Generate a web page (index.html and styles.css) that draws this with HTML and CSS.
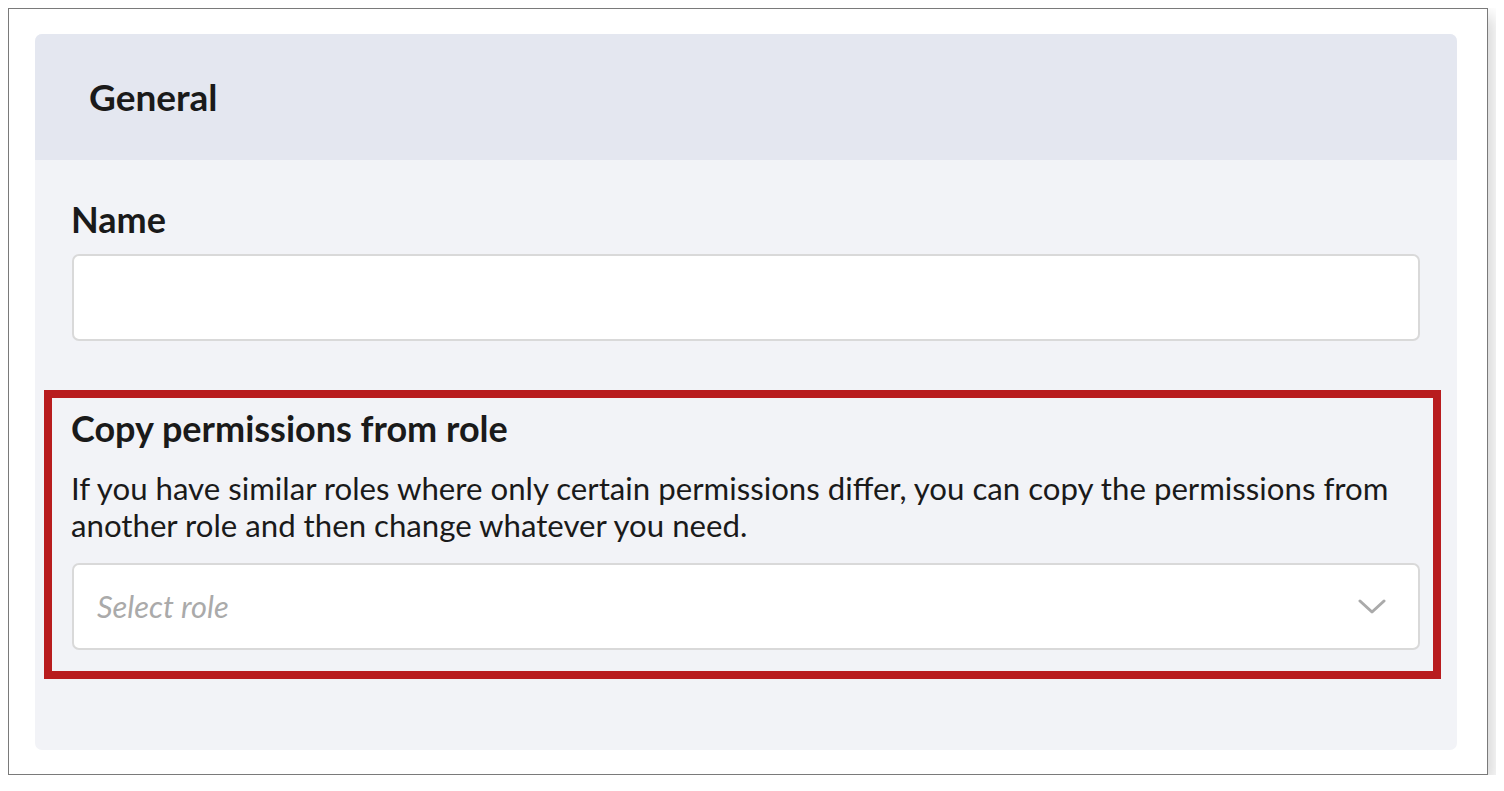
FILE: index.html
```html
<!DOCTYPE html>
<html lang="en">
  <head>
    <meta charset="UTF-8" />
    <meta name="viewport" content="width=device-width, initial-scale=1.0" />
    <title>Role settings</title>
    <link rel="stylesheet" href="styles.css">
  </head>
  <body>
    <div class="frame">
      <div class="card">
        <div class="card-header">
          <h2>General</h2>
        </div>

        <div class="card-body">
          <!-- Name -->
          <label class="field-label" for="role-name">Name</label>
          <input class="text-input" id="role-name" type="text" />

          <!-- Copy permissions (highlighted) -->
          <div class="copy-group">
            <label class="field-label" for="copy-role">Copy permissions from role</label>
            <p class="help">
              If you have similar roles where only certain permissions differ, you can copy the permissions from
              another role and then change whatever you need.
            </p>
            <div class="select" id="copy-role">
              <span class="placeholder">Select role</span>
              <svg class="chevron" width="28" height="16" viewBox="0 0 28 16">
                <polyline points="2,2 14,13 26,2" fill="none" stroke="#aaaaaa" stroke-width="3" stroke-linecap="round" stroke-linejoin="round" />
              </svg>
            </div>
          </div>
        </div>
      </div>
    </div>
  </body>
</html>
```

FILE: styles.css
```css
:root {
  --text: #1a1a1a;
  --header-bg: #e4e7f0;
  --body-bg: #f2f3f7;
  --field-border: #d9d9d9;
  --mark: #b81c1e;
  --radius: 7px;
}

* {
  box-sizing: border-box;
}

body {
  margin: 8px;
  background: #ffffff;
  font-family: "Lato", "Open Sans", sans-serif;
  color: var(--text);
}

.frame {
  width: 1480px;
  height: 767px;
  border: 1px solid #7a7a7a;
  background: #ffffff;
  box-shadow: 6px 8px 16px rgba(0, 0, 0, 0.16);
  padding: 25px 30px 24px 26px;
}

.card {
  background: var(--body-bg);
  border-radius: var(--radius);
  overflow: hidden;
}

.card-header {
  background: var(--header-bg);
  height: 126px;
  padding-left: 54px;
  display: flex;
  align-items: center;
}

.card-header h2 {
  margin: 0;
  font-size: 37px;
  font-weight: 700;
  line-height: 1.2;
}

.card-body {
  padding: 38px 37px 71px;
}

.field-label {
  display: block;
  font-size: 36px;
  font-weight: 700;
  line-height: 1.2;
  margin-bottom: 13px;
  margin-left: -1px;
}

.text-input {
  display: block;
  width: 100%;
  height: 87px;
  border: 2px solid var(--field-border);
  border-radius: var(--radius);
  background: #ffffff;
  font: inherit;
}

.copy-group {
  margin: 49px -21px 0 -28px;
  border: 8px solid var(--mark);
  padding: 9px 13px 21px 20px;
}

.copy-group .field-label {
  margin-bottom: 20px;
}

.help {
  margin: 0 0 19px -1px;
  font-size: 31.2px;
  line-height: 37px;
}

.select {
  height: 87px;
  border: 2px solid var(--field-border);
  border-radius: var(--radius);
  background: #ffffff;
  display: flex;
  align-items: center;
  justify-content: space-between;
  padding: 0 32px 0 23px;
}

.placeholder {
  font-size: 30.8px;
  font-style: italic;
  color: #aaaaaa;
}

.chevron {
  display: block;
}
```
